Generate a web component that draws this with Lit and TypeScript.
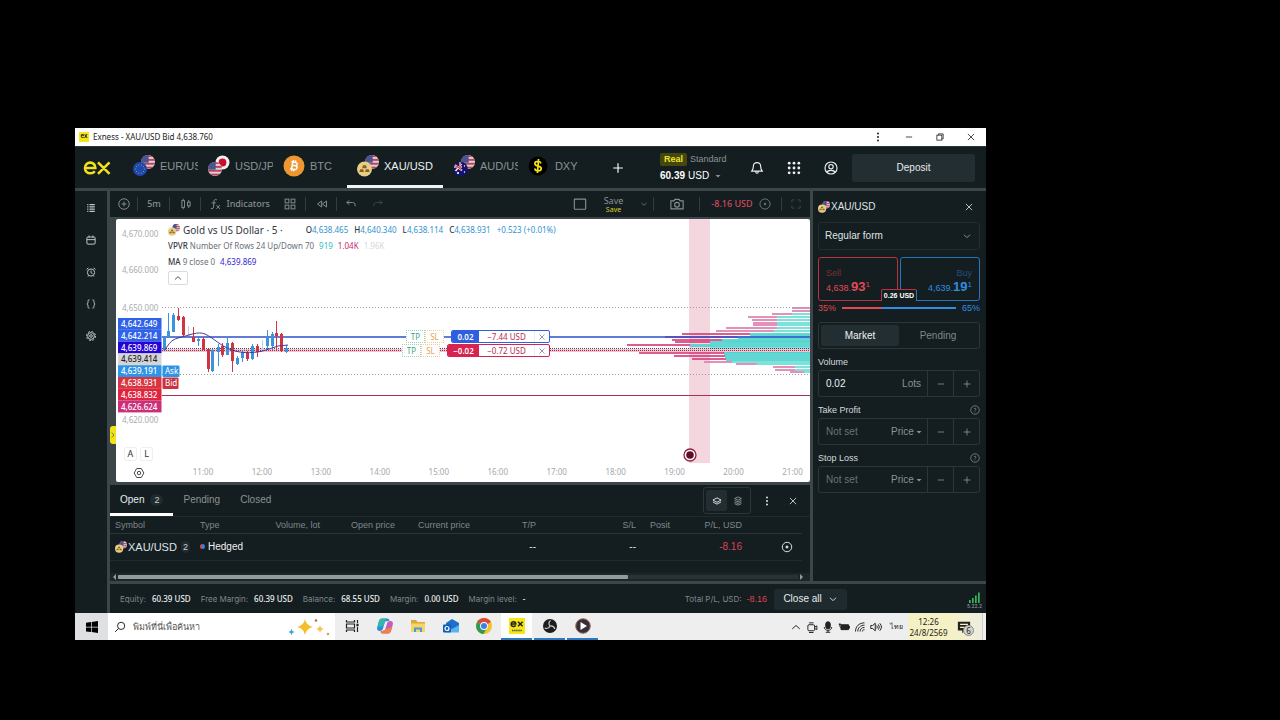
import { LitElement, html, svg, css } from "lit";
import { customElement } from "lit/decorators.js";
import { classMap } from "lit/directives/class-map.js";

/* ---------- artwork ---------- */

const usFlag = (cx: number, cy: number, r: number, id: string) => svg`
  <clipPath id=${id}><circle cx=${cx} cy=${cy} r=${r} /></clipPath>
  <g clip-path=${`url(#${id})`}>
    <rect x=${cx - r} y=${cy - r} width=${r * 2} height=${r * 2} fill="#d9d2da" />
    ${[0, 1, 2, 3].map((i) => svg`<rect x=${cx - r} y=${cy - r + (i * r) / 1.8} width=${r * 2} height=${r / 3.6} fill="#b8455a" />`)}
    <rect x=${cx - r} y=${cy - r} width=${r * 1.1} height=${r * 1.1} fill="#4a5590" />
  </g>`;

const starRing = (cx: number, cy: number, r: number) =>
  Array.from({ length: 10 }, (_, i) => {
    const a = (i / 10) * Math.PI * 2;
    return svg`<circle cx=${cx + Math.cos(a) * r} cy=${cy + Math.sin(a) * r} r=".5" fill="#b5a86a" />`;
  });

const gold = (cx: number, cy: number, r: number) => svg`
  <circle cx=${cx} cy=${cy} r=${r} fill="#e8cd84" />
  <g transform=${`translate(${cx} ${cy}) scale(${r / 7})`} fill="#86602a">
    <path d="M-1.4 -3.4h2.8l.8 2.8h-4.4zM-4 .2h2.8l.7 2.7h-4.3zM1.2 .2h2.8l.8 2.7h-4.3z" />
  </g>`;

let uid = 0;
const pairIcon = (kind: string) => {
  const k = `f${uid++}`;
  const art = () => {
    switch (kind) {
      case "eur":
        return svg`${usFlag(15, 7, 7, k)}<circle cx="7" cy="14" r="7" fill="#1d49ae" />${starRing(7, 14, 4.3)}`;
      case "jpy":
        return svg`<circle cx="14.5" cy="7.5" r="7" fill="#f3eff0" /><circle cx="14.5" cy="7.5" r="3.9" fill="#c8102e" />${usFlag(7, 14, 7, k)}`;
      case "xau":
        return svg`${usFlag(15, 7, 7, k)}${gold(7.5, 14, 7.5)}`;
      case "aud":
        return svg`${usFlag(15, 7, 7, k)}<circle cx="7.5" cy="14" r="7.3" fill="#14146e" />
          <path d="M2 10l7 5.5M7 7.3v7.7M1 12h8M2.5 16l6-7" stroke="#eee" stroke-width="1.6" />
          <path d="M2.5 10.5l6 4.5M7 7.8v6.700M1.500 12h7" stroke="#d0344a" stroke-width="1" />
          <circle cx="5" cy="18" r="1.1" fill="#fff" /><circle cx="11.5" cy="11" r=".7" fill="#fff" /><circle cx="11.5" cy="17" r=".7" fill="#fff" />`;
      case "btc":
        return svg`<circle cx="11" cy="11" r="10.500" fill="#ee9730" />
          <path d="M8.3 6.8l4.400.8c2 .4 2 3-.2 3.200 2.400.5 1.900 3.900-.8 3.600l-4.600-.8M9.800 7.200l-1.200 6.600M9.300 10.300l3.200.5M10.500 5l-.4 2M12.700 5.400l-.4 2M8.900 14l-.4 2M11.100 14.400l-.4 2" fill="none" stroke="#fff" stroke-width="1.500" />`;
      default:
        return svg`<circle cx="10" cy="11" r="9.5" fill="#000" />
          <path d="M13 8.400c-.4-1.300-1.600-2-3-2-1.900 0-3.100.9-3.100 2.300 0 3.200 6.300 1.500 6.300 4.700 0 1.500-1.400 2.400-3.200 2.400-1.700 0-3-.8-3.300-2.300M10.600 4l-1.200 14" fill="none" stroke="#f2e21c" stroke-width="1.700" />`;
    }
  };
  return html`<svg class="pair" viewBox="0 0 22 22" aria-hidden="true">${art()}</svg>`;
};

const glyph = (body: unknown) => html`<svg class="glyph" viewBox="0 0 16 16" aria-hidden="true">${body}</svg>`;

const I = {
  list: svg`<path stroke-width="1.600" d="M3 3.500h1.500M6 3.500h7M3 6.500h1.500M6 6.500h7M3 9.500h1.500M6 9.500h7M3 12.500h1.500M6 12.500h7" />`,
  calendar: svg`<rect x="2.5" y="4" width="11" height="9.5" rx="1.5" /><path d="M2.500 7.500h11M5.500 2v3M10.500 2v3" />`,
  alarm: svg`<circle cx="8" cy="8.700" r="4.800" /><path d="M8 6v3l2 1M2 4.500l2.500-2M14 4.500l-2.500-2M4 14l1-1.300M12 14l-1-1.300" />`,
  braces: svg`<path d="M6 2.500c-2 0-2 .8-2 2.300S4 7.500 2.500 8C4 8.500 4 9.700 4 11.200s0 2.300 2 2.300M10 2.500c2 0 2 .8 2 2.300s0 2.700 1.500 3.200C12 8.500 12 9.700 12 11.200s0 2.300-2 2.300" />`,
  gear: svg`<circle cx="8" cy="8" r="1.800" /><circle cx="8" cy="8" r="4.500" /><circle cx="8" cy="8" r="6" stroke-dasharray="2.600 2.100" />`,
  plusRing: svg`<circle cx="8" cy="8" r="7" /><path d="M8 4.700v6.600M4.700 8h6.600" />`,
  candles: svg`<rect x="2.5" y="3.5" width="3.5" height="9" /><path d="M4.200 1v2.500M4.200 12.500V15" /><rect x="10" y="5.5" width="3.5" height="5" /><path d="M11.700 2.500v3M11.700 10.500v3" />`,
  fx: svg`<path d="M10.500 2.500c-3-1.500-3.800.3-4 3L6 12c-.2 2-1.200 2.800-3.500 1.800M3.500 6.500h5.500M10 9.500l4.500 5M14.500 9.500l-4.500 5" />`,
  tiles: svg`<rect x="1.5" y="1.5" width="5" height="5" /><rect x="9.5" y="1.5" width="5" height="5" /><rect x="1.5" y="9.5" width="5" height="5" /><rect x="9.5" y="9.5" width="5" height="5" />`,
  rewind: svg`<path d="M7.500 4v8L2 8zM14 4v8L8.500 8z" />`,
  undo: svg`<path d="M5.500 3L2.500 6l3 3M2.500 6H10c2.500 0 3.500 1.500 3.500 3.500V11" />`,
  redo: svg`<path d="M10.500 3l3 3-3 3M13.500 6H6C3.500 6 2.500 7.500 2.500 9.500V11" />`,
  square: svg`<rect x="1.500" y="2.500" width="13" height="11.500" rx=".5" />`,
  down: svg`<path d="M3 6l5 4.500L13 6" />`,
  up: svg`<path d="M3 10.500L8 6l5 4.500" />`,
  camera: svg`<path d="M1 4.500h3.500L5.700 2.700h4.600l1.200 1.800H15v9H1z" /><circle cx="8" cy="8.800" r="2.700" />`,
  xRing: svg`<circle cx="8" cy="8" r="6.800" /><path d="M6.500 6.500l3 3M9.500 6.500l-3 3" />`,
  expand: svg`<path d="M2.500 6V2.500H6M10 2.500h3.500V6M13.500 10v3.500H10M6 13.500H2.500V10" />`,
  plus: svg`<path d="M8 2.500v11M2.500 8h11" />`,
  minus: svg`<path d="M3 8h10" />`,
  bell: svg`<path d="M8 1.800c-2.800 0-4.200 2-4.200 4.400 0 3-1 4-1.800 5.300h12c-.8-1.300-1.800-2.300-1.800-5.300C12.200 3.800 10.800 1.800 8 1.800zM6.500 12c0 2.700 3 2.700 3 0" />`,
  user: svg`<circle cx="8" cy="8" r="6.900" /><circle cx="8" cy="6.500" r="2.500" /><path d="M3.500 13c1-3 8-3 9 0" />`,
  close: svg`<path d="M3 3l10 10M13 3L3 13" />`,
  restore: svg`<rect x="3" y="5" width="8" height="8" /><path d="M5.500 5V3h7.500v8H11" />`,
  layers: svg`<path d="M8 3L1.500 6.500 8 10l6.500-3.500zM1.500 9.500L8 13l6.500-3.500" />`,
  stack: svg`<path d="M8 1.500L2.500 4 8 6.500 13.500 4zM2.500 6.800L8 9.300l5.500-2.500M2.500 9.500L8 12l5.500-2.500M2.500 12.200L8 14.700l5.500-2.500" />`,
  target: svg`<circle cx="8" cy="8" r="6.300" /><circle cx="8" cy="8" r="1.400" fill="currentColor" />`,
  info: svg`<circle cx="8" cy="8" r="6.800" /><path d="M6.500 6.200c.3-1.600 3-1.500 3 .2 0 1.200-1.500 1.300-1.500 2.600M8 10.500v1.200" />`,
  search: svg`<circle cx="9.500" cy="6.500" r="4.800" /><path d="M6 10L1.500 14.500" />`,
};
const caret = svg`<path d="M3 6h10l-5 5z" fill="currentColor" stroke="none" />`;
const dots3 = svg`<g fill="currentColor" stroke="none"><circle cx="8" cy="2.500" r="1.600" /><circle cx="8" cy="8" r="1.600" /><circle cx="8" cy="13.500" r="1.600" /></g>`;
const dots9 = svg`<g fill="currentColor" stroke="none">${[2.5, 8, 13.5].map((x) => [2.5, 8, 13.5].map((y) => svg`<circle cx=${x} cy=${y} r="1.600" />`))}</g>`;

/* ---------- data ---------- */

const symbols = [
  { name: "EUR/USD", kind: "eur" },
  { name: "USD/JPY", kind: "jpy" },
  { name: "BTC", kind: "btc" },
  { name: "XAU/USD", kind: "xau", active: true },
  { name: "AUD/USD", kind: "aud" },
  { name: "DXY", kind: "dxy" },
];

/* x, wick top, wick bottom, body top, body bottom, colour */
type Candle = [number, number, number, number, number, string];
const B = "#3a93dd", R = "#cf3442", L = "#c9ccd8";
const candles: Candle[] = [
  [164, 337, 351, 337, 350, B], [168, 313, 337, 331, 337, B], [173, 313, 332, 315, 332, B],
  [178, 308, 321, 316, 320, R], [183, 316, 337, 317, 335, R], [188, 326, 336, 335, 336, L],
  [193, 327, 342, 337, 342, R], [198, 338, 346, 339, 341, B], [203, 337, 350, 339, 350, R],
  [208, 349, 372, 349, 369, R], [212, 349, 372, 350, 371, B], [218, 344, 366, 347, 352, B],
  [222, 343, 357, 346, 355, R], [227, 337, 355, 343, 355, B], [232, 342, 372, 343, 361, R],
  [237, 356, 365, 358, 364, B], [242, 350, 362, 352, 358, B], [247, 351, 361, 353, 359, R],
  [252, 344, 360, 346, 359, B], [257, 344, 357, 346, 352, R], [262, 340, 350, 348, 350, L],
  [267, 330, 350, 338, 346, B], [272, 332, 350, 334, 346, B], [276, 321, 350, 333, 336, R],
  [281, 333, 352, 334, 350, R], [286, 345, 353, 348, 352, B],
];

/* volume profile rows: y, down-volume start, up-volume start, inside value area */
type Row = [number, number, number, boolean];
const profile: Row[] = [
  [307, 792, 810, false], [310, 792, 810, false], [313, 772, 792, false], [316, 748, 777, false],
  [319, 752, 777, false], [322, 753, 777, false], [324, 753, 777, false], [327, 726, 777, false],
  [330, 716, 774, false], [333, 682, 750, true], [336, 665, 738, true], [339, 672, 722, true],
  [341, 675, 710, true], [344, 627, 690, true], [347, 710, 710, false], [350, 627, 723, true],
  [352, 639, 724, true], [355, 674, 725, true], [358, 692, 726, true], [361, 704, 732, false],
  [363, 736, 757, false], [366, 773, 795, false], [369, 775, 795, false], [371, 790, 804, false],
];

const tags = [
  ["4,642.649", "#2f62e8"], ["4,642.214", "#2f62e8"], ["4,639.869", "#2503d6"], ["4,639.414", "#d5d5d7"],
  ["4,639.191", "#2f93e6"], ["4,638.931", "#d8353f"], ["4,638.832", "#e0243f"], ["4,626.624", "#cb2f7b"],
];

const hours = ["11:00", "12:00", "13:00", "14:00", "15:00", "16:00", "17:00", "18:00", "19:00", "20:00", "21:00"];

/* ---------- root ---------- */

@customElement("app-root")
export class AppRoot extends LitElement {
  static styles = css`
    :host { display: block; min-height: 100vh; background: #000; color: #dfe3e4; font: 10px/14px "Liberation Sans", Arial, sans-serif; }
    * { box-sizing: border-box; }
    button, input, select { font: inherit; color: inherit; background: none; border: 0; margin: 0; padding: 0; border-radius: 0; appearance: none; outline: none; min-width: 0; }
    a { color: inherit; text-decoration: none; }
    button { display: flex; align-items: center; justify-content: center; }
    .glyph { display: block; width: 12px; height: 12px; flex: none; fill: none; stroke: currentColor; stroke-width: 1.3; }
    .lg .glyph { width: 14px; height: 14px; }
    .sm .glyph { width: 10px; height: 10px; }
    .xs .glyph { width: 8px; height: 8px; }
    .pair { display: block; width: 22px; height: 22px; flex: none; }
    .mini .pair { width: 12px; height: 12px; }
    .grow { flex: 1; }

    .stage { display: flex; height: 100vh; min-height: 640px; padding: 128px 294px 80px 75px; }
    .window { flex: 1; min-width: 0; display: flex; flex-direction: column; background: #3c4649; }

    .title { height: 18px; background: #fff; color: #222; display: flex; align-items: center; padding-left: 4px; font: 8px/12px "Noto Sans", sans-serif; }
    .exmini { width: 10px; height: 10px; margin-right: 4px; background: #f6e617; color: #222; font: 700 6px/8px Inter, sans-serif; text-align: center; }
    .title .ctl { width: 31px; height: 18px; }

    .head { height: 42px; background: #141d20; display: flex; align-items: stretch; padding: 0 11px 0 8px; border-top: 1px solid #2c3538; }
    .logo { width: 50px; display: flex; align-items: center; }
    .logo svg { width: 28px; height: 16px; }
    .tabs { display: flex; gap: 10px; }
    .tab { justify-content: flex-start; gap: 5px; min-width: 54px; color: #8b9295; font-size: 11px; border-bottom: 3px solid transparent; }
    .tab .name { max-width: 38px; overflow: hidden; white-space: nowrap; }
    .tab.on { color: #eef1f1; padding: 0 10px; border-bottom-color: #f2f4f4; }
    .tab.on .name { max-width: none; }
    .add { width: 24px; margin-left: 24px; color: #fff; }
    .acct { display: grid; align-content: center; gap: 3px; width: 87px; }
    .acct .row { display: flex; align-items: center; gap: 3px; font-size: 9px; line-height: 13px; color: #8b9295; }
    .acct .badge { background: #45470f; color: #ece42a; border-radius: 2px; padding: 0 4px; font-weight: 700; }
    .acct .sum { justify-content: flex-start; color: #fff; gap: 3px; }
    .acct .sum .glyph { margin-left: 2px; color: #8b9295; }
    .hicons { display: flex; gap: 17px; margin-right: 11px; color: #eef1f1; }
    .hicons button { width: 20px; }
    .deposit { width: 123px; height: 28px; align-self: center; background: #222e32; border-radius: 3px; color: #e8ecec; }

    .body { flex: 1; min-height: 0; display: grid; grid-template-columns: 32px minmax(0, 1fr); gap: 3px; padding-top: 3px; }
    .rail { background: #141d20; display: flex; flex-direction: column; color: #c2c8ca; padding-top: 1px; }
    .rail button { height: 32px; }
    .work { display: grid; grid-template-columns: minmax(0, 1fr) 173px; grid-template-rows: minmax(0, 1fr) 30px; gap: 3px; min-width: 0; }
    .mid { position: relative; display: flex; flex-direction: column; min-width: 0; }

    .tools { height: 26px; background: #141d20; display: flex; color: #858d90; font: 500 9px/12px "Noto Sans", sans-serif; }
    .tools > * { flex: none; }
    .tools .sep { background: linear-gradient(#333d40, #333d40) right center / 1px 14px no-repeat; }
    .tools .grow { flex: 1; }
    .tools .faint { color: #3b4548; }
    .w20 { width: 20px; } .w26 { width: 26px; } .w28 { width: 28px; } .w31 { width: 31px; } .w32 { width: 32px; }
    .w41 { width: 41px; } .w46 { width: 46px; } .w73 { width: 73px; } .w82 { width: 82px; }
    .tools .ind { gap: 5px; justify-content: flex-end; padding-right: 4px; }
    .save { flex-direction: column; font-weight: 400; line-height: 11px; color: #8b9295; }
    .save small { font-size: 7px; line-height: 8px; color: #d8d02a; }
    .pnl { gap: 6px; color: #6b7376; }
    .pnl span { color: #d6485a; }

    .chart { flex: 1; min-height: 0; position: relative; margin: 2px 0 3px 6px; background: #fff; border-radius: 2px; overflow: hidden; }
    .plot { display: block; width: 100%; height: 100%; }
    .plot text { font-family: "Noto Sans", sans-serif; font-size: 8px; }
    .legend { position: absolute; left: 52px; top: 3px; display: grid; font: 8px/16px "Noto Sans", sans-serif; color: #6a6f78; justify-items: start; }
    .legend > div { display: flex; gap: 5px; white-space: nowrap; }
    .legend .head1 { gap: 3px; font-size: 10px; color: #33373f; align-items: center; }
    .legend .ohlc { display: flex; gap: 6px; margin-left: 20px; font-size: 8px; color: #2f93cf; }
    .legend b { font-weight: 500; color: #33373f; }
    .legend .cy { color: #2bc4bd; } .legend .mg { color: #c9266e; } .legend .lt { color: #d5d7da; } .legend .ma { color: #2f1dd0; }
    .legend button { width: 20px; height: 14px; margin-top: 1px; border: 1px solid #d9dbde; border-radius: 2px; color: #333; background: #fff; }
    .order { position: absolute; display: flex; gap: 7px; height: 13px; font: 8px/11px "Noto Sans", sans-serif; }
    .order.buy { left: 290px; top: 111px; }
    .order.sell { left: 286px; top: 125px; }
    .order .lim { display: flex; background: #fff; }
    .order .lim button { width: 19px; border: 1px dotted #9ed3bd; color: #3fa77c; }
    .order .lim button + button { border-color: #eccf9c; color: #e2a84a; }
    .order .pill { display: flex; border: 1px solid #2f5fe0; border-radius: 2px; background: #fff; color: #b52a52; overflow: hidden; }
    .order .pill b { width: 27px; background: #2f5fe0; color: #fff; text-align: center; font-weight: 600; }
    .order .pill span { width: 55px; text-align: center; }
    .order .pill button { width: 15px; border-left: 1px solid #ececf2; color: #5b6680; }
    .order.sell .pill { border-color: #d8224f; } .order.sell .pill b { background: #d8224f; width: 31px; }
    .scale { position: absolute; left: 8px; bottom: 21px; display: flex; gap: 3px; font: 9px/12px "Noto Sans", sans-serif; color: #333; }
    .scale button { width: 13px; height: 14px; border: 1px solid #eeeff1; border-radius: 2px; background: #fff; }
    .axiscfg { position: absolute; left: 17px; bottom: 3px; color: #444; }
    .handle { position: absolute; left: 0; bottom: 137px; width: 6px; height: 18px; background: #f2e21c; border-radius: 3px 0 0 3px; color: #444; }
    .handle .glyph { transform: rotate(90deg); }

    .deals { height: 96px; background: #141d20; display: flex; flex-direction: column; }
    .dtabs { height: 32px; display: flex; align-items: stretch; border-bottom: 1px solid #20292c; color: #8b9295; padding-right: 4px; }
    .dtabs .dt { padding: 0 10px; gap: 6px; border-bottom: 3px solid transparent; border-top: 2px solid transparent; }
    .dtabs .dt.on { color: #e8ecec; border-bottom-color: #fff; }
    .count { background: #202b2f; border-radius: 6px; width: 13px; font-size: 9px; line-height: 12px; text-align: center; color: #c9cfd1; }
    .seg { display: flex; align-self: center; height: 27px; border: 1px solid #2c3639; border-radius: 3px; padding: 2px; margin-right: 3px; }
    .seg button { width: 21px; border-radius: 2px; color: #9aa1a4; }
    .seg button.on { background: #222e32; color: #fff; }
    .act { width: 26px; color: #dfe3e4; }
    table { border-collapse: collapse; table-layout: fixed; width: calc(100% - 8px); }
    th, td { padding: 0 5px; text-align: right; font-weight: 400; white-space: nowrap; border-bottom: 1px solid #2b3538; }
    th { height: 16px; font-size: 9px; line-height: 12px; color: #7f878a; }
    td { height: 27px; border-bottom-color: #20292c; }
    .l { text-align: left; }
    .c1 { width: 85px; } .c2 { width: 65px; } .c3 { width: 65px; } .c4 { width: 75px; } .c6 { width: 66px; } .c7 { width: 100px; } .c8 { width: 34px; } .c9 { width: 72px; }
    .sym { display: flex; align-items: center; gap: 1px; font-size: 11px; }
    .sym .count { margin-left: 3px; }
    .hedge { display: flex; align-items: center; gap: 3px; color: #eef1f1; }
    .dot { width: 5px; height: 5px; border-radius: 50%; background: linear-gradient(90deg, #d6485a 50%, #3a7fd0 50%); }
    .neg { color: #dd4453; }
    .last { display: flex; justify-content: flex-end; padding-right: 4px; }
    .hscroll { margin-top: auto; height: 8px; display: flex; align-items: center; justify-content: space-between; padding: 0 6px 0 2px; background: #1c2528; color: #929a9d; }
    .hscroll .track { flex: 1; background: #283235; }
    .hscroll .thumb { width: 75%; height: 4px; background: #929a9d; border-radius: 1px; }
    .hscroll svg { width: 6px; height: 6px; fill: currentColor; }

    .side { background: #141d20; padding: 0 6px 0 5px; display: flex; flex-direction: column; }
    .side .shead { height: 31px; display: flex; align-items: center; gap: 1px; }
    .side .shead button { width: 22px; height: 22px; }
    .picker { display: flex; height: 28px; border: 1px solid #222c30; border-radius: 3px; align-items: center; padding: 0 7px 0 6px; }
    .picker select { flex: 1; }
    .picker .glyph { color: #9aa1a4; }
    .quotes { position: relative; display: grid; grid-template-columns: 1fr 1fr; gap: 2px; margin-top: 7px; height: 44px; }
    .q { flex-direction: column; align-items: flex-start; padding: 3px 7px 0; border: 1px solid #b8333f; border-radius: 3px; color: #e04a55; font-size: 9px; line-height: 13px; }
    .q i { font-style: normal; color: #7c2f38; }
    .q.b i { color: #1f4f80; }
    .q.b { border-color: #2576bf; color: #2f8ee0; align-items: flex-end; }
    .q strong { font-size: 13px; font-weight: 700; }
    .q sup { font-size: 8px; line-height: 0; }
    .spread { position: absolute; left: 50%; bottom: 0; width: 36px; margin-left: -18px; text-align: center; font-size: 7px; line-height: 11px; font-weight: 700; background: #141d20; border: 1px solid #b8333f; border-right-color: #2576bf; border-bottom: 0; border-radius: 2px 2px 0 0; color: #fff; white-space: nowrap; }
    .ratio { display: flex; align-items: center; gap: 6px; height: 14px; font-size: 9px; color: #e04a55; }
    .ratio .up { color: #2f8ee0; }
    .bar { flex: 1; height: 2px; background: #2f8ee0; display: flex; }
    .bar div { background: #e04a55; }
    .modes { display: grid; grid-template-columns: 1fr 1fr; height: 27px; margin-top: 7px; border: 1px solid #2c3639; border-radius: 3px; padding: 2px; color: #7f878a; }
    .modes .on { background: #222e32; color: #f0f3f3; border-radius: 2px; }
    .flabel { display: flex; align-items: center; justify-content: space-between; height: 21px; padding-top: 5px; font-size: 9px; line-height: 12px; color: #d5dadb; }
    .flabel .glyph { color: #7f878a; }
    .field { display: grid; grid-template-columns: minmax(0, 1fr) 26px 26px; height: 27px; border: 1px solid #2c3639; border-radius: 3px; color: #8b9295; }
    .field .in { display: flex; align-items: center; padding: 0 4px 0 7px; gap: 1px; }
    .field .in > span { padding-right: 2px; }
    .field input { flex: 1; color: #eef1f1; }
    .field input::placeholder { color: #6b7376; }
    .field > button { border-left: 1px solid #2c3639; }

    .status { grid-column: 1 / -1; background: #141d20; display: flex; align-items: center; padding: 0 4px 0 10px; font: 8px/12px Inter, sans-serif; color: #7f878a; white-space: nowrap; }
    .status dl { display: flex; gap: 10px; margin: 0; }
    .status dl div { display: flex; gap: 6px; }
    .status dd { margin: 0; color: #eef1f1; font-family: "Noto Sans", sans-serif; font-weight: 500; }
    .total { display: flex; gap: 5px; margin-right: 7px; }
    .total .neg { font: 9px/12px "Liberation Sans", sans-serif; }
    .closeall { height: 21px; width: 73px; background: #1f2a2e; border-radius: 3px; color: #e8ecec; gap: 6px; font: 10px/14px "Liberation Sans", sans-serif; }
    .signal { margin-left: 120px; display: grid; justify-items: center; color: #35b558; padding-top: 3px; }
    .signal svg { width: 11px; height: 11px; display: block; }
    .signal span { font-size: 5px; line-height: 6px; color: #9aa0a2; }

    .task { height: 27px; background: #eeeeef; color: #222; display: flex; font: 8px/12px "Noto Sans", sans-serif; }
    .start { width: 33px; background: #dfe0e3; }
    .find { width: 227px; background: #fff; display: flex; align-items: center; padding: 0 5px 0 6px; gap: 7px; }
    .find input { flex: 1; font-size: 9px; color: #444; }
    .find input::placeholder { color: #555; }
    .find .spark { width: 42px; height: 20px; }
    .app { width: 31px; margin: 0 1px; display: flex; align-items: center; justify-content: center; border-bottom: 2px solid transparent; padding-top: 1px; }
    .app svg { width: 18px; height: 18px; display: block; }
    .app.run { border-bottom-color: #2c79c0; }
    .app.front { background: #fff; }
    .tray { display: flex; align-items: center; margin-right: 3px; }
    .tray > button { width: 16px; height: 20px; }
    .tray .ime { width: 24px; font-size: 7px; }
    .clock { width: 41px; text-align: center; line-height: 11px; background: #f6f1c4; height: 100%; display: grid; align-content: center; }
    .tray .note { width: 34px; height: 100%; position: relative; background: linear-gradient(90deg, #f6f1c4, #ededdf); border-right: 1px solid #cfcfcf; }
    .note em { position: absolute; left: 14px; top: 12px; width: 11px; height: 11px; border-radius: 50%; background: #d5d5d0; border: 1px solid #888; font-style: normal; line-height: 9px; text-align: center; }
    .note .glyph { margin-right: 3px; }
  `;

  private header() {
    return html`
      <header class="title sm">
        <span class="exmini">ex</span><span>Exness - XAU/USD Bid 4,638.760</span><span class="grow"></span>
        <button class="ctl" aria-label="Menu">${glyph(dots3)}</button>
        <button class="ctl" aria-label="Minimize">${glyph(I.minus)}</button>
        <button class="ctl" aria-label="Restore">${glyph(I.restore)}</button>
        <button class="ctl" aria-label="Close">${glyph(I.close)}</button>
      </header>
      <nav class="head">
        <a class="logo" href="#" aria-label="Exness">
          <svg viewBox="0 0 28 16" fill="none" stroke="#f2e21c" stroke-width="2.600">
            <path d="M2 8h10.300C12.300 4.600 10 2.600 7.200 2.600 4.200 2.600 2 5 2 8s2.200 5.300 5.400 5.300c2 0 3.400-.8 4.400-2.100M15 2.300L26.500 13.800M26.500 2.300L15 13.800" />
          </svg>
        </a>
        <div class="tabs">
          ${symbols.map((s) => html`<button class=${classMap({ tab: true, on: !!s.active })}>${pairIcon(s.kind)}<span class="name">${s.name}</span></button>`)}
        </div>
        <button class="add lg" aria-label="Add">${glyph(I.plus)}</button>
        <span class="grow"></span>
        <div class="acct">
          <div class="row"><span class="badge">Real</span>Standard</div>
          <button class="sum xs"><b>60.39</b>USD${glyph(caret)}</button>
        </div>
        <div class="hicons lg">
          <button aria-label="Notifications">${glyph(I.bell)}</button>
          <button aria-label="Apps">${glyph(dots9)}</button>
          <button aria-label="Profile">${glyph(I.user)}</button>
        </div>
        <button class="deposit">Deposit</button>
      </nav>`;
  }

  private toolbar() {
    return html`
      <div class="tools">
        <button class="sep w28" aria-label="Add symbol">${glyph(I.plusRing)}</button>
        <button class="sep w32">5m</button>
        <button class="sep w31" aria-label="Chart type">${glyph(I.candles)}</button>
        <button class="ind w73">${glyph(I.fx)}Indicators</button>
        <button class="sep w32" aria-label="Layouts">${glyph(I.tiles)}</button>
        <button class="sep w31" aria-label="Replay">${glyph(I.rewind)}</button>
        <button class="w28" aria-label="Undo">${glyph(I.undo)}</button>
        <button class="w26 faint" aria-label="Redo">${glyph(I.redo)}</button>
        <span class="grow"></span>
        <button class="w26 lg" aria-label="Layout">${glyph(I.square)}</button>
        <button class="save w41">Save<small>Save</small></button>
        <button class="sep w20 xs" aria-label="More">${glyph(I.down)}</button>
        <button class="sep w46 lg" aria-label="Snapshot">${glyph(I.camera)}</button>
        <button class="sep pnl w82"><span>-8.16 USD</span>${glyph(I.xRing)}</button>
        <button class="w28 faint" aria-label="Full screen">${glyph(I.expand)}</button>
      </div>`;
  }

  private plot() {
    return html`
      <svg class="plot" viewBox="116 219 694 263" preserveAspectRatio="xMinYMin slice" aria-label="XAU/USD price chart">
        <rect x="689" y="219" width="21" height="244" fill="#f3d6de" />
        ${profile.map(([y, a, b, inside]) => svg`
          <rect x=${a} y=${y} width=${b - a} height="2" fill=${inside ? "#d6417c" : "#dd7fac"} opacity=".85" />
          <rect x=${b} y=${y} width=${810 - b} height=${inside ? 3 : 2} fill=${inside ? "#4fd3cd" : "#6fded8"} opacity=".9" />`)}
        <g stroke-width="1">
          <path d="M162 307.500H810M162 374.500H810" stroke="#9a9da6" stroke-dasharray="1 2" />
          <path d="M162 395.500H810" stroke="#a8305c" />
          <path d="M162 350.500H810" stroke="#f3c3d2" stroke-width="3" />
          <path d="M162 348.500H810" stroke="#444a58" stroke-dasharray="1 1" />
          <path d="M162 350.500H810" stroke="#a02c4c" stroke-dasharray="1 1" />
          <path d="M162 337H810" stroke="#2c50c8" stroke-width="1.500" />
        </g>
        ${candles.map(([x, t, b, o, c, f]) => svg`<rect x=${x} y=${t} width="1" height=${b - t} fill=${f} /><rect x=${x - 1} y=${o} width="3" height=${c - o} fill=${f} />`)}
        <path d="M164 351C168 346 170 340 178 338C190 335 198 331 205 334C214 338 220 346 232 350C242 354 258 353 266 350L278 346L288 345" fill="none" stroke="#4a3a9c" stroke-width="1" />
        <g fill="#aaacb0">
          <text x="122" y="237">4,670.000</text><text x="122" y="273">4,660.000</text><text x="122" y="311">4,650.000</text><text x="122" y="423">4,620.000</text>
        </g>
        ${tags.map(([t, f], i) => svg`<rect x="118" y=${318 + i * 11.8} width="43.5" height="11.8" fill=${f} /><text x="121" y=${327 + i * 11.8} fill=${i === 3 ? "#222" : "#fff"} font-weight="500">${t}</text>`)}
        <rect x="162.5" y="365.5" width="17" height="11.5" rx="1" fill="#2f93e6" /><text x="165" y="374" fill="#fff">Ask</text>
        <rect x="162.5" y="377.5" width="16" height="11.5" rx="1" fill="#c9333f" /><text x="165" y="386" fill="#fff">Bid</text>
        <g fill="#a5a8ad" text-anchor="middle">${hours.map((h, i) => svg`<text x=${203 + i * 58.95} y="475">${h}</text>`)}</g>
        <circle cx="690" cy="455" r="6" fill="#fff" stroke="#8e2240" stroke-width="1.300" /><circle cx="690" cy="455" r="3.800" fill="#5e1029" />
      </svg>`;
  }

  private order(side: string, lots: string, pnl: string) {
    return html`
      <div class="order ${side}">
        <div class="lim"><button>TP</button><button>SL</button></div>
        <div class="pill xs"><b>${lots}</b><span>${pnl}</span><button aria-label="Close position">${glyph(I.close)}</button></div>
      </div>`;
  }

  private chart() {
    return html`
      <section class="chart">
        ${this.plot()}
        <div class="legend">
          <div class="head1 mini">${pairIcon("xau")}Gold vs US Dollar · 5 ·
            <span class="ohlc"><span><b>O</b>4,638.465</span><span><b>H</b>4,640.340</span><span><b>L</b>4,638.114</span><span><b>C</b>4,638.931</span><span>+0.523 (+0.01%)</span></span>
          </div>
          <div><span><b>VPVR</b> Number Of Rows 24 Up/Down 70</span><span class="cy">919</span><span class="mg">1.04K</span><span class="lt">1.96K</span></div>
          <div><span><b>MA</b> 9 close 0</span><span class="ma">4,639.869</span></div>
          <button class="sm" aria-label="Collapse legend">${glyph(I.up)}</button>
        </div>
        ${this.order("buy", "0.02", "−7.44 USD")}
        ${this.order("sell", "−0.02", "−0.72 USD")}
        <div class="scale"><button>A</button><button>L</button></div>
        <button class="axiscfg" aria-label="Axis settings">${glyph(svg`<path d="M5 2h6l3.500 6L11 14H5L1.500 8z" /><circle cx="8" cy="8" r="2.300" />`)}</button>
      </section>`;
  }

  private deals() {
    return html`
      <section class="deals">
        <div class="dtabs">
          <button class="dt on">Open <span class="count">2</span></button>
          <button class="dt">Pending</button>
          <button class="dt">Closed</button>
          <span class="grow"></span>
          <div class="seg sm"><button class="on" aria-label="Grouped">${glyph(I.layers)}</button><button aria-label="Ungrouped">${glyph(I.stack)}</button></div>
          <button class="act sm" aria-label="More">${glyph(dots3)}</button>
          <button class="act sm" aria-label="Close panel">${glyph(I.close)}</button>
        </div>
        <table>
          <thead><tr>
            <th class="l c1">Symbol</th><th class="l c2">Type</th><th class="c3">Volume, lot</th><th class="c4">Open price</th><th class="c4">Current price</th>
            <th class="c6">T/P</th><th class="c7">S/L</th><th class="c8">Posit</th><th class="c9">P/L, USD</th><th></th>
          </tr></thead>
          <tbody><tr>
            <td class="l"><span class="sym mini">${pairIcon("xau")}XAU/USD <span class="count">2</span></span></td>
            <td class="l"><span class="hedge"><span class="dot"></span>Hedged</span></td>
            <td></td><td></td><td></td><td>--</td><td>--</td><td></td><td class="neg">-8.16</td>
            <td><span class="last">${glyph(I.target)}</span></td>
          </tr></tbody>
        </table>
        <div class="hscroll">
          <svg viewBox="0 0 6 6"><path d="M4 0v6L1 3z" /></svg>
          <div class="track"><div class="thumb"></div></div>
          <svg viewBox="0 0 6 6"><path d="M2 0v6l3-3z" /></svg>
        </div>
      </section>`;
  }

  private field(id: string, label: string, value: string, unit: string) {
    const priced = unit === "Price";
    return html`
      <div class="flabel sm"><label for=${id}>${label}</label>${priced ? glyph(I.info) : ""}</div>
      <div class="field sm">
        <div class="in xs">
          <input id=${id} .value=${value} placeholder="Not set" />
          ${priced
            ? html`<select aria-label="${label} unit"><option>Price</option></select>${glyph(caret)}`
            : html`<span>${unit}</span>`}
        </div>
        <button aria-label="Decrease ${label}">${glyph(I.minus)}</button>
        <button aria-label="Increase ${label}">${glyph(I.plus)}</button>
      </div>`;
  }

  private side() {
    const sellers = 35;
    return html`
      <aside class="side">
        <div class="shead mini">${pairIcon("xau")}<span>XAU/USD</span><span class="grow"></span><button class="sm" aria-label="Close form">${glyph(I.close)}</button></div>
        <div class="picker sm"><select aria-label="Form type"><option>Regular form</option></select>${glyph(I.down)}</div>
        <div class="quotes">
          <button class="q"><i>Sell</i><span>4,638.<strong>93</strong><sup>1</sup></span></button>
          <button class="q b"><i>Buy</i><span>4,639.<strong>19</strong><sup>1</sup></span></button>
          <span class="spread">0.26 USD</span>
        </div>
        <div class="ratio"><span>${sellers}%</span><div class="bar"><div style="width:${sellers}%"></div></div><span class="up">${100 - sellers}%</span></div>
        <div class="modes"><button class="on">Market</button><button>Pending</button></div>
        ${this.field("vol", "Volume", "0.02", "Lots")}
        ${this.field("tp", "Take Profit", "", "Price")}
        ${this.field("sl", "Stop Loss", "", "Price")}
      </aside>`;
  }

  private status() {
    const items = [["Equity:", "60.39 USD"], ["Free Margin:", "60.39 USD"], ["Balance:", "68.55 USD"], ["Margin:", "0.00 USD"], ["Margin level:", "-"]];
    return html`
      <footer class="status">
        <dl>${items.map(([k, v]) => html`<div><dt>${k}</dt><dd>${v}</dd></div>`)}</dl>
        <span class="grow"></span>
        <span class="total">Total P/L, USD: <span class="neg">-8.16</span></span>
        <button class="closeall sm">Close all ${glyph(I.down)}</button>
        <div class="signal">
          <svg viewBox="0 0 11 11" fill="currentColor"><path d="M0 8h1.700v3H0zM3 6h1.700v5H3zM6 3.500h1.700V11H6zM9 .5h1.700V11H9z" /></svg>
          <span>5.22.2</span>
        </div>
      </footer>`;
  }

  private taskbar() {
    return html`
      <footer class="task">
        <button class="start" aria-label="Start"><svg width="12" height="12" viewBox="0 0 12 12"><path d="M0 1.700L5 1v4.700H0zM5.700.9L12 0v5.700H5.700zM0 6.400h5v4.700l-5-.7zM5.700 6.400H12V12l-6.300-.9z" /></svg></button>
        <div class="find">${glyph(I.search)}<input aria-label="ค้นหา" placeholder="พิมพ์ที่นี่เพื่อค้นหา" />
          <svg class="spark" viewBox="0 0 42 20"><path d="M17 2q1.200 6.500 8 8-6.800 1.500-8 8-1.200-6.500-8-8 6.800-1.500 8-8z" fill="#f5bd2c" /><path d="M32 8q.7 3.500 4 4-3.300.8-4 4-.7-3.200-4-4 3.300-.5 4-4z" fill="#f3c64d" /><path d="M3.500 12q.5 2.500 3 3-2.500.6-3 3-.5-2.400-3-3 2.500-.5 3-3z" fill="#36a6d8" /><circle cx="28" cy="3.500" r="1.300" fill="#9b7a52" /><circle cx="40" cy="17" r="1.300" fill="#c8a860" /></svg>
        </div>
        <a class="app" href="#" aria-label="Task view"><svg viewBox="0 0 18 18" fill="none" stroke="#222" stroke-width="1.200"><path d="M3.500 3v2h8V3M3.500 15v-2h8v2M3.500 7h8v4h-8zM14.500 3v3M14.500 10v5" /><rect x="14" y="7.300" width="1" height="1.400" fill="#222" /></svg></a>
        <a class="app" href="#" aria-label="Copilot"><svg viewBox="0 0 18 18"><path d="M6 1.500h5.500c1.200 0 1.600 1 2 2.200L9 4.500 7 11.500c-.5 1.500-1.200 2.500-3 2.500-2.500 0-3.500-1.500-2.700-4L3 4c.6-1.700 1.500-2.500 3-2.500z" fill="#2a8fd8" /><path d="M6 1.500h4L7.500 9l-6 1L3 4c.6-1.700 1.500-2.500 3-2.500z" fill="#35b6a8" /><path d="M12 16.500H6.500c-1.200 0-1.600-1-2-2.200L9 13.500l2-7C11.500 5 12.200 4 14 4c2.500 0 3.500 1.500 2.700 4L15 14c-.6 1.700-1.500 2.500-3 2.500z" fill="#c65bc0" /><path d="M12 16.500H6.500c-1 0-1.500-.8-1.900-1.800L16.300 9.500 15 14c-.6 1.700-1.500 2.500-3 2.500z" fill="#f0804a" /></svg></a>
        <a class="app" href="#" aria-label="Files"><svg viewBox="0 0 18 18"><path d="M2 3h5l1.500 2H16v10H2z" fill="#dfa936" /><path d="M2 6.500h14V15H2z" fill="#f7d468" /><path d="M5 15v-4.500h8V15h-2v-2.500H7V15z" fill="#4a9cd0" /></svg></a>
        <a class="app" href="#" aria-label="Mail"><svg viewBox="0 0 18 18"><path d="M4 6l6-4 7 4v9H4z" fill="#1f6fc9" /><path d="M4 8l6 4 7-4v7.500H4z" fill="#56b5ee" /><rect x="1" y="7.500" width="8" height="8" rx="1" fill="#0f5fb8" /><circle cx="5" cy="11.500" r="2" fill="none" stroke="#fff" stroke-width="1.200" /></svg></a>
        <a class="app" href="#" aria-label="Chrome"><svg viewBox="0 0 18 18"><circle cx="9" cy="9" r="8" fill="#f4c22f" /><path d="M9 9L2.100 5A8 8 0 0 1 15.900 5z" fill="#da4a3a" /><path d="M2.100 5A8 8 0 0 0 8.500 17L12 10.700 9 9z" fill="#2f9a52" /><circle cx="9" cy="9" r="3.900" fill="#fff" /><circle cx="9" cy="9" r="3" fill="#3f7fe6" /></svg></a>
        <a class="app run front" href="#" aria-label="Exness"><svg viewBox="0 0 18 18"><rect x="1" y="1" width="16" height="16" fill="#f6e617" /><path d="M3.200 7h4.600c0-3-4.600-3.200-4.600 0s3.600 2.800 4.400 1.300M10 4.800l4.600 4.500M14.600 4.800L10 9.300" fill="none" stroke="#222" stroke-width="1.500" /><path d="M4 13.500h10" stroke="#555" stroke-width="1.600" stroke-dasharray="1.500 .6" /></svg></a>
        <a class="app run" href="#" aria-label="Recorder"><svg viewBox="0 0 18 18"><circle cx="9" cy="9" r="7" fill="#1d1d20" /><path d="M9 9C7.500 7 7.500 5 9.500 3.500M9 9c2.500-.3 4.300.8 4.800 3M9 9c-1 2.300-3 3-5.300 2" fill="none" stroke="#c9c9cc" stroke-width="1.200" /></svg></a>
        <a class="app run" href="#" aria-label="Player"><svg viewBox="0 0 18 18"><circle cx="9" cy="9" r="7.300" fill="#33303a" stroke="#a86a58" stroke-width="1" /><path d="M6.500 5l6.500 4-6.500 4z" fill="#fff" /></svg></a>
        <span class="grow"></span>
        <div class="tray">
          <button aria-label="Hidden icons">${glyph(I.up)}</button>
          <button aria-label="Camera">${glyph(svg`<rect x="2.500" y="5" width="9" height="8" rx="1.500" /><path d="M11.500 8l3-1.500v5l-3-1.500M4 2.500h6M4 15.300h6" />`)}</button>
          <button aria-label="Microphone">${glyph(svg`<rect x="5" y="1" width="6" height="9.500" rx="3" fill="#222" /><path d="M3 8c0 6 10 6 10 0M8 12.500V15M5 15h6" />`)}</button>
          <button aria-label="Battery">${glyph(svg`<path d="M4 5h10v6.500H4zM14 7h1.500v2.500H14z" fill="#222" /><path d="M1 4.500h3M2.500 3v4c0 1.500 1 2 2.500 2" />`)}</button>
          <button aria-label="Network">${glyph(svg`<path d="M2 14C2 7 7 2.500 14 2.500M5 14c0-5 4-8.500 9-8.500M8 14c0-3 2.500-5.500 6-5.500M11 14c0-1.500 1.500-2.500 3-2.500" />`)}</button>
          <button aria-label="Volume">${glyph(svg`<path d="M1 6h2.500L7 3v10L3.500 10H1zM9 6q1.500 2 0 4M11 4.500q3 3.500 0 7M13 3q4.500 5 0 10" />`)}</button>
          <button class="ime">ไทย</button>
          <div class="clock"><span>12:26</span><span>24/8/2569</span></div>
          <button class="note lg" aria-label="Notifications">${glyph(svg`<path d="M1 2h14v10H9l-3 3v-3H1z" fill="#222" stroke="none" /><path d="M3.500 5h9M3.500 8.500h9" stroke="#f6f1c4" />`)}<em>6</em></button>
        </div>
      </footer>`;
  }

  render() {
    return html`
      <div class="stage">
        <main class="window">
          ${this.header()}
          <div class="body">
            <div class="rail">
              <button aria-label="Watchlist">${glyph(I.list)}</button>
              <button aria-label="Calendar">${glyph(I.calendar)}</button>
              <button aria-label="Alerts">${glyph(I.alarm)}</button>
              <button aria-label="Code">${glyph(I.braces)}</button>
              <button aria-label="Settings">${glyph(I.gear)}</button>
            </div>
            <div class="work">
              <div class="mid">
                ${this.toolbar()} ${this.chart()} ${this.deals()}
                <button class="handle xs" aria-label="Open drawing tools">${glyph(I.up)}</button>
              </div>
              ${this.side()} ${this.status()}
            </div>
          </div>
          ${this.taskbar()}
        </main>
      </div>`;
  }
}
